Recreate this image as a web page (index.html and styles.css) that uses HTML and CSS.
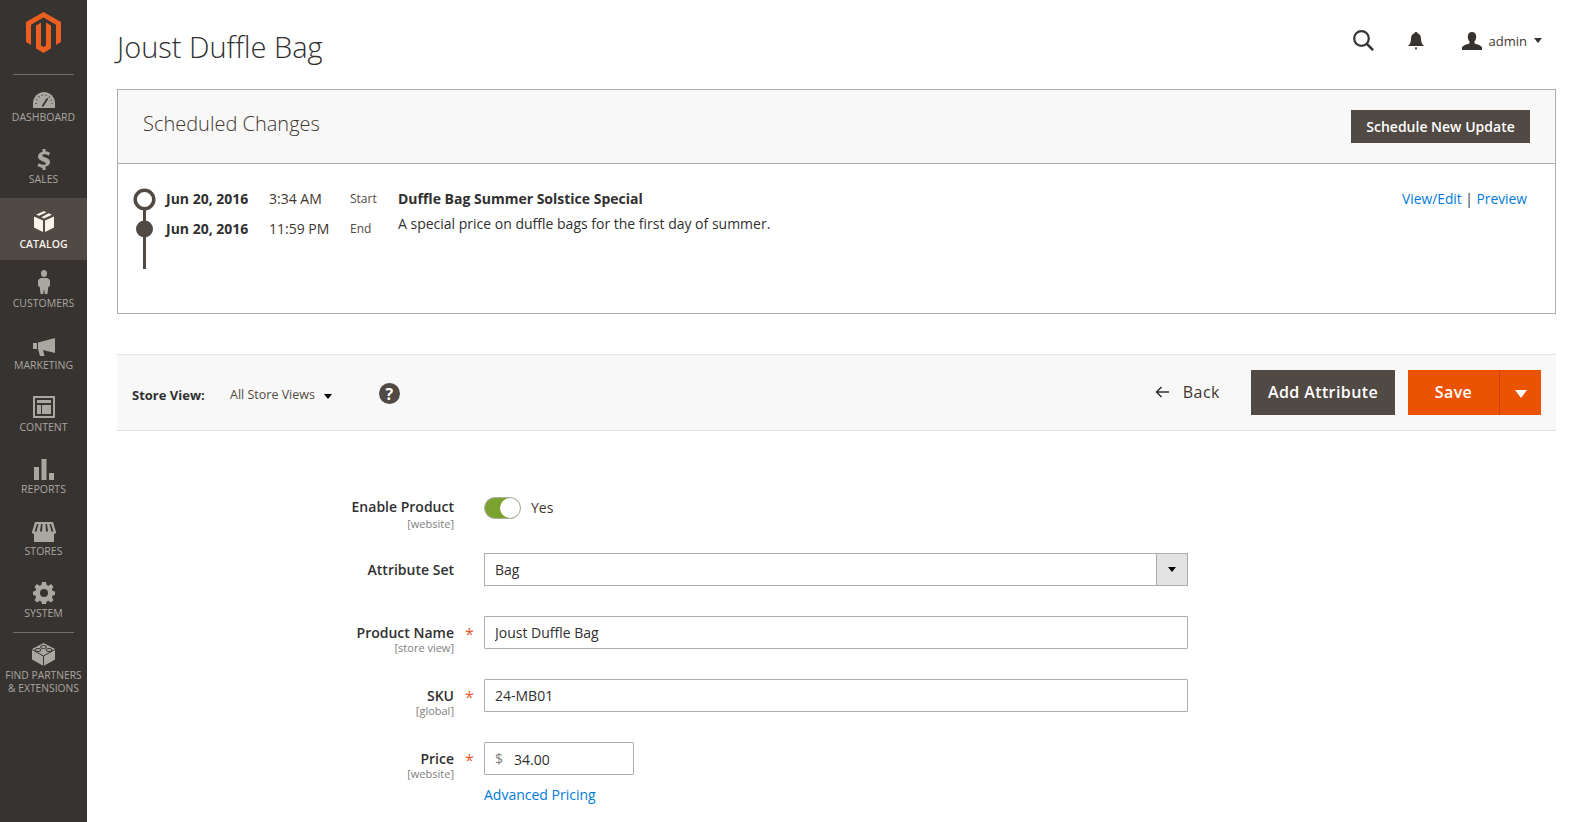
FILE: index.html
```html
<!DOCTYPE html>
<html lang="en">

<head>
    <meta charset="UTF-8">
    <meta name="viewport" content="width=device-width, initial-scale=1.0">
    <title>Joust Duffle Bag</title>
    <link rel="stylesheet" href="styles.css">
</head>

<body>
    <nav class="sidebar">
        <div class="logo">
            <svg width="35" height="41" viewBox="0 0 35 41">
                <path fill="#eb5f20" d="M17.500 0L35 10V30L30 33V12.800L17.500 5.500L5 12.800V33L0 30V10z" />
                <path fill="#eb5f20" d="M10 13.500L15 10.500V33.500L17.500 35L20 33.500V10.500L25 13.500V36.500L17.500 41L10 36.500z" />
            </svg>
        </div>
        <a class="nav-item">
            <svg width="22" height="16" viewBox="0 0 22 16">
                <path fill="#aaa6a0" d="M11 0C5 0 0 5 0 11v5h22v-5C22 5 17 0 11 0z" />
                <path fill="none" stroke="#373330" stroke-width="1.800" stroke-linecap="round" d="M9.800 13.800L14.200 7" />
                <path fill="none" stroke="#373330" stroke-width="1.300" stroke-dasharray="1 2.700" d="M3 12C3 7 6.500 3 11 3s8 4 8 9" />
            </svg>
            <span>Dashboard</span>
        </a>
        <a class="nav-item">
            <svg width="14" height="21" viewBox="0 0 14 21"><path fill="#aaa6a0" d="M5.500 0h3v2.300c1.700.2 3.300.7 4.500 1.400l-1.100 2.800c-1.400-.7-3-1.200-4.500-1.200-1.300 0-2 .4-2 1.100 0 .8.900 1.200 3 2 3 1 4.600 2.300 4.600 4.700 0 2.300-1.500 4-4.500 4.500V21h-3v-2.300c-2-.2-3.900-.8-5-1.600l1.100-2.800c1.500.9 3.300 1.500 4.900 1.500 1.500 0 2.400-.5 2.400-1.300 0-.9-.9-1.300-3-2.100C3.400 11.400 1 10.200 1 7.500c0-2.300 1.700-4.200 4.500-4.800z" /></svg>
            <span>Sales</span>
        </a>
        <a class="nav-item active">
            <svg width="20" height="21" viewBox="0 0 20 21"><path fill="#f7f3eb" d="M10 0l2.500 1.200-7.300 3.600L2 3.800zM14.500 2.200L18 3.800l-8 3.600-2.700-1.200zM0 5.500l9 4V21l-9-4.500zM20 5.500v11L11 21V9.500z" /></svg>
            <span>Catalog</span>
        </a>
        <a class="nav-item">
            <svg width="12" height="24" viewBox="0 0 14 24" preserveAspectRatio="none"><circle fill="#aaa6a0" cx="7" cy="3.500" r="3.500" /><path fill="#aaa6a0" d="M3 8h8l3 2v6l-2 1-1 7H8l-1-5-1 5H3l-1-7-2-1v-6z" /></svg>
            <span>Customers</span>
        </a>
        <a class="nav-item">
            <svg width="22" height="18" viewBox="0 0 22 18"><path fill="#aaa6a0" d="M0 5h4v6H0zM5 4.500L22 0v15l-12-3 1.500 6H7l-2-7z" /></svg>
            <span>Marketing</span>
        </a>
        <a class="nav-item">
            <svg width="22" height="22" viewBox="0 0 22 22"><path fill="#aaa6a0" fill-rule="evenodd" d="M0 0h22v22H0zM2 2v18h18V2zM4 4h14v3H4zM4 9h4v9H4zM9 9h9v9H9z" /></svg>
            <span>Content</span>
        </a>
        <a class="nav-item">
            <svg width="20" height="21" viewBox="0 0 20 21"><path fill="#aaa6a0" d="M0 8h5v13H0zM7.500 0h5v21h-5zM15 14h5v7h-5z" /></svg>
            <span>Reports</span>
        </a>
        <a class="nav-item">
            <svg width="24" height="20" viewBox="0 0 24 20"><path fill="#aaa6a0" d="M3 0h18l3 10c0 1.500-1 2-2 2v8H2v-8c-1 0-2-.5-2-2zM5 2L2.500 9.500h2L6.500 2zM9 2L8 9.500h2L10.500 2zM13.500 2L14 9.500h2L15 2zM17.500 2l2 7.500h2L19 2z" fill-rule="evenodd" /></svg>
            <span>Stores</span>
        </a>
        <a class="nav-item">
            <svg width="22" height="22" viewBox="0 0 22 22"><path fill="#aaa6a0" fill-rule="evenodd" d="M9 0h4l.6 3 1.900.8L18 2l2.500 2.800-1.600 2.500.8 1.800L22 9.500v3.500l-2.300.6-.8 1.900 1.600 2.500L18 20.500l-2.500-1.700-1.900.8L13 22H9l-.6-2.400-1.900-.8L4 20.500 1.500 18l1.600-2.500-.8-1.900L0 13V9.500l2.300-.4.8-1.800-1.600-2.500L4 2l2.500 1.800L8.400 3zM11 7a4 4 0 1 0 0 8 4 4 0 0 0 0-8z" /></svg>
            <span>System</span>
        </a>
        <div class="nav-sep"></div>
        <a class="nav-item partners">
            <svg width="23" height="23" viewBox="0 0 23 23"><path fill="#aaa6a0" d="M11.500 0L23 6v10.500L11.500 23 0 16.500V6z" /><path fill="none" stroke="#373330" d="M0 6.500l11.500 6.500L23 6.500M11.500 13v10" /><ellipse fill="none" stroke="#373330" cx="11.500" cy="4" rx="3" ry="1.500" /><ellipse fill="none" stroke="#373330" cx="6" cy="7" rx="3" ry="1.500" /><ellipse fill="none" stroke="#373330" cx="17" cy="7" rx="3" ry="1.500" /></svg>
            <span>Find Partners<br>&amp; Extensions</span>
        </a>
    </nav>

    <div class="page">
        <header class="topbar">
            <h1>Joust Duffle Bag</h1>
            <div class="top-actions">
                <svg class="icon-search" width="21" height="21" viewBox="0 0 21 21"><circle fill="none" stroke="#373330" stroke-width="2.200" cx="8.500" cy="8.500" r="7.300" /><path stroke="#373330" stroke-width="2.600" d="M13.800 13.800l6.300 6.300" /></svg>
                <svg class="icon-bell" width="16" height="18" viewBox="0 0 16 18"><path fill="#373330" d="M8 0c1 0 1.500.6 1.500 1.300C12 2 13 4 13 7c0 3 1 5 3 7H0c2-2 3-4 3-7 0-3 1-5 3.500-5.700C6.500.6 7 0 8 0zM6.500 15.500h3L8 18z" /></svg>
                <svg class="icon-user" width="20" height="18" viewBox="0 0 20 18"><path fill="#373330" d="M10 0c2.700 0 4.200 2 4.200 4.800 0 2-.8 3.700-1.700 4.700v2c2.500.8 7.500 2 7.500 4.500V18H0v-2c0-2.500 5-3.700 7.500-4.500v-2C6.600 8.500 5.800 6.800 5.800 4.800 5.800 2 7.300 0 10 0z" /></svg>
                <span class="admin-name">admin</span>
                <i class="caret"></i>
            </div>
        </header>

        <section class="sched">
            <div class="sched-head">
                <h2>Scheduled Changes</h2>
                <button class="btn btn-dark btn-small">Schedule New Update</button>
            </div>
            <div class="sched-body">
                <svg class="timeline" width="33" height="85" viewBox="0 0 33 85">
                    <path stroke="#514943" stroke-width="3" d="M11.500 20v63" />
                    <circle fill="#fff" stroke="#514943" stroke-width="3.500" cx="11.500" cy="13.500" r="9.300" />
                    <circle fill="#514943" cx="11.500" cy="43" r="8.500" />
                </svg>
                <div class="sched-grid">
                    <strong>Jun 20, 2016</strong>
                    <span class="time">3:34 AM</span>
                    <span class="when">Start</span>
                    <strong>Duffle Bag Summer Solstice Special</strong>
                    <span class="links"><a>View/Edit</a> | <a>Preview</a></span>
                    <strong>Jun 20, 2016</strong>
                    <span class="time">11:59 PM</span>
                    <span class="when">End</span>
                    <span class="desc">A special price on duffle bags for the first day of summer.</span>
                </div>
            </div>
        </section>

        <section class="toolbar">
            <div class="scope">
                <b>Store View:</b>
                <span class="scope-value">All Store Views</span>
                <i class="caret caret-dark"></i>
                <span class="help">?</span>
            </div>
            <div class="actions">
                <a class="back"><svg width="14" height="12" viewBox="0 0 14 12"><path fill="none" stroke="#303030" stroke-width="1.500" d="M14 6H1.500M6.500 1l-5 5 5 5" /></svg>Back</a>
                <button class="btn btn-dark btn-large">Add Attribute</button>
                <div class="save">
                    <button class="btn btn-save">Save</button>
                    <button class="btn btn-save-more"><i class="caret caret-white"></i></button>
                </div>
            </div>
        </section>

        <form class="form">
            <div class="row row-toggle">
                <label>Enable Product<small>[website]</small></label>
                <div class="control toggle-wrap">
                    <span class="toggle"><i></i></span>
                    <span class="yes">Yes</span>
                </div>
            </div>
            <div class="row">
                <label>Attribute Set</label>
                <div class="control select">
                    <span>Bag</span>
                    <span class="select-btn"><i class="caret caret-dark"></i></span>
                </div>
            </div>
            <div class="row required">
                <label>Product Name<small>[store view]</small></label>
                <div class="control"><input type="text" value="Joust Duffle Bag"></div>
            </div>
            <div class="row required">
                <label>SKU<small>[global]</small></label>
                <div class="control"><input type="text" value="24-MB01"></div>
            </div>
            <div class="row required">
                <label>Price<small>[website]</small></label>
                <div class="control">
                    <div class="price"><span>$</span><input type="text" value="34.00"></div>
                    <a class="adv">Advanced Pricing</a>
                </div>
            </div>
        </form>
    </div>
</body>

</html>
```

FILE: styles.css
```css
* {
    box-sizing: border-box;
}

html,
body {
    height: 100%;
}

body {
    display: flex;
    margin: 0;
    overflow: hidden;
    font-family: "Open Sans", Arial, sans-serif;
    font-size: 14px;
    color: #303030;
    background-color: #fff;
}

a {
    color: #007bdb;
}

.caret {
    display: inline-block;
    width: 0;
    height: 0;
    border-left: 4.500px solid transparent;
    border-right: 4.500px solid transparent;
    border-top: 5px solid #373330;
}

/* sidebar */

.sidebar {
    flex: 0 0 87px;
    background-color: #373330;
}

.logo {
    display: flex;
    justify-content: center;
    height: 75px;
    padding-top: 12px;
    margin: 0 13px -1px;
    border-bottom: 1px solid #736e69;
}

.nav-item {
    display: flex;
    flex-direction: column;
    align-items: center;
    justify-content: flex-end;
    height: 62px;
    padding-bottom: 12px;
    font-size: 10.500px;
    line-height: 13px;
    text-align: center;
    text-transform: uppercase;
    color: #aaa6a0;
}

.nav-item svg {
    margin-bottom: 3px;
}

.nav-item.active {
    padding-bottom: 9px;
    background-color: #514943;
    color: #f7f3eb;
    font-weight: 600;
}

.nav-item.active svg {
    margin-bottom: 6px;
}

.nav-sep {
    height: 1px;
    margin: 0 13px;
    background-color: #736e69;
}

.nav-item.partners {
    justify-content: flex-start;
    height: 75px;
    padding-top: 10px;
    font-size: 10.300px;
    white-space: nowrap;
}

/* page */

.page {
    flex: 1;
    min-width: 0;
    padding: 0 31px 0 30px;
}

.topbar {
    display: flex;
    justify-content: space-between;
    align-items: center;
    height: 89px;
}

.topbar h1 {
    margin: 3px 0 0;
    font-size: 29px;
    font-weight: 300;
    color: #303030;
}

.top-actions {
    display: flex;
    align-items: center;
    padding-right: 14px;
    margin-top: -8px;
}

.icon-search {
    margin-right: 34px;
}

.icon-bell {
    margin-right: 38px;
}

.icon-user {
    margin-right: 7px;
}

.admin-name {
    font-size: 13px;
    color: #41362f;
    margin-right: 7px;
}

/* scheduled changes */

.sched {
    height: 225px;
    margin-bottom: 40px;
    border: 1px solid #adadad;
}

.sched-head {
    display: flex;
    justify-content: space-between;
    align-items: center;
    height: 74px;
    padding: 0 25px;
    background-color: #f8f8f8;
    border-bottom: 1px solid #adadad;
}

.sched-head h2 {
    margin: 0 0 7px;
    font-size: 20px;
    font-weight: 300;
    color: #41362f;
}

.btn {
    border: none;
    color: #fff;
    font-family: inherit;
    font-weight: 600;
}

.btn-dark {
    background-color: #514943;
}

.btn-small {
    width: 179px;
    height: 33px;
    font-size: 14px;
}

.btn-large {
    width: 144px;
    height: 45px;
    padding-bottom: 2px;
    font-size: 16px;
    letter-spacing: .4px;
}

.sched-body {
    display: flex;
    padding: 22px 28px 0 15px;
}

.sched-grid {
    flex: 1;
    display: grid;
    grid-template-columns: 103px 81px 48px 1fr auto;
    grid-auto-rows: 30px;
    align-items: center;
    margin-top: -3px;
}

.time {
    color: #41362f;
}

.when {
    font-size: 12px;
    color: #514943;
}

.links {
    font-size: 13.800px;
}

.links a {
    color: #007bdb;
}

.desc {
    grid-column: 4 / 6;
    align-self: start;
    margin-top: 1px;
    line-height: 20px;
}

/* store view toolbar */

.toolbar {
    display: flex;
    justify-content: space-between;
    align-items: center;
    height: 77px;
    padding: 0 15px;
    background-color: #f8f8f8;
    border-top: 1px solid #e3e3e3;
    border-bottom: 1px solid #e3e3e3;
}

.scope {
    display: flex;
    align-items: center;
    padding-top: 2px;
    font-size: 12.500px;
}

.scope b {
    width: 98px;
    margin-top: 2px;
    font-size: 13px;
    font-weight: 700;
}

.scope-value {
    margin: 2px 9px 0 0;
    color: #514943;
}

.scope .caret {
    margin-top: 5px;
}

.caret-dark {
    border-top-color: #000;
}

.help {
    display: flex;
    justify-content: center;
    align-items: center;
    width: 21px;
    height: 21px;
    margin-left: 47px;
    border-radius: 50%;
    background-color: #514943;
    color: #fff;
    font-size: 16px;
    font-weight: 700;
}

.actions {
    display: flex;
    align-items: center;
}

.back {
    display: flex;
    align-items: center;
    gap: 14px;
    margin: -2px 31px 0 0;
    font-size: 16px;
    letter-spacing: .5px;
    color: #41362f;
}

.save {
    display: flex;
    margin-left: 13px;
}

.btn-save,
.btn-save-more {
    height: 45px;
    background-color: #eb5202;
}

.btn-save {
    width: 91px;
    padding-bottom: 2px;
    font-size: 16px;
    letter-spacing: .4px;
}

.btn-save-more {
    display: flex;
    justify-content: center;
    align-items: center;
    width: 42px;
    border-left: 1px solid #c64602;
}

.caret-white {
    border-left-width: 6.500px;
    border-right-width: 6.500px;
    border-top: 8px solid #fff;
    margin-top: 2px;
}

/* product form */

.form {
    display: flex;
    flex-direction: column;
    gap: 30px;
    padding-top: 66px;
}

.row {
    position: relative;
    display: grid;
    grid-template-columns: 337px 704px;
    column-gap: 30px;
    height: 33px;
}

.row-toggle {
    height: 26px;
}

.row label {
    padding-top: 7px;
    font-weight: 600;
    font-size: 14px;
    line-height: 20px;
    text-align: right;
    color: #303030;
}

.row-toggle label {
    padding-top: 0;
}

.row label small {
    display: block;
    margin-top: -1px;
    font-size: 11px;
    line-height: 12px;
    font-weight: 400;
    color: #808080;
}

.row-toggle label small {
    margin-top: 1px;
}

.required::after {
    content: "*";
    position: absolute;
    left: 348px;
    top: 7px;
    font-size: 16px;
    color: #e9582a;
}

.control input {
    width: 100%;
    height: 33px;
    padding: 0 10px;
    border: 1px solid #adadad;
    border-radius: 1px;
    font-family: inherit;
    font-size: 14px;
    color: #303030;
}

.toggle-wrap {
    display: flex;
    align-items: flex-start;
    gap: 10px;
}

.toggle {
    position: relative;
    width: 37px;
    height: 22px;
    border-radius: 11px;
    border: 1px solid #adadad;
    background-color: #79a22e;
}

.toggle i {
    position: absolute;
    right: 0;
    top: 0;
    width: 20px;
    height: 20px;
    border-radius: 50%;
    background-color: #fff;
}

.yes {
    line-height: 22px;
    color: #41362f;
}

.select {
    display: flex;
    justify-content: space-between;
    align-items: center;
    height: 33px;
    padding-left: 10px;
    border: 1px solid #adadad;
}

.select-btn {
    display: flex;
    justify-content: center;
    align-items: center;
    width: 31px;
    height: 31px;
    background-color: #e3e3e3;
    border-left: 1px solid #adadad;
}

.price {
    display: flex;
    align-items: center;
    width: 150px;
    height: 33px;
    padding-left: 10px;
    border: 1px solid #adadad;
    border-radius: 1px;
}

.price span {
    color: #808080;
}

.price input {
    height: 31px;
    border: none;
    padding: 2px 0 0 11px;
}

.adv {
    display: block;
    margin-top: 10px;
    font-size: 14px;
    line-height: 20px;
}
```
